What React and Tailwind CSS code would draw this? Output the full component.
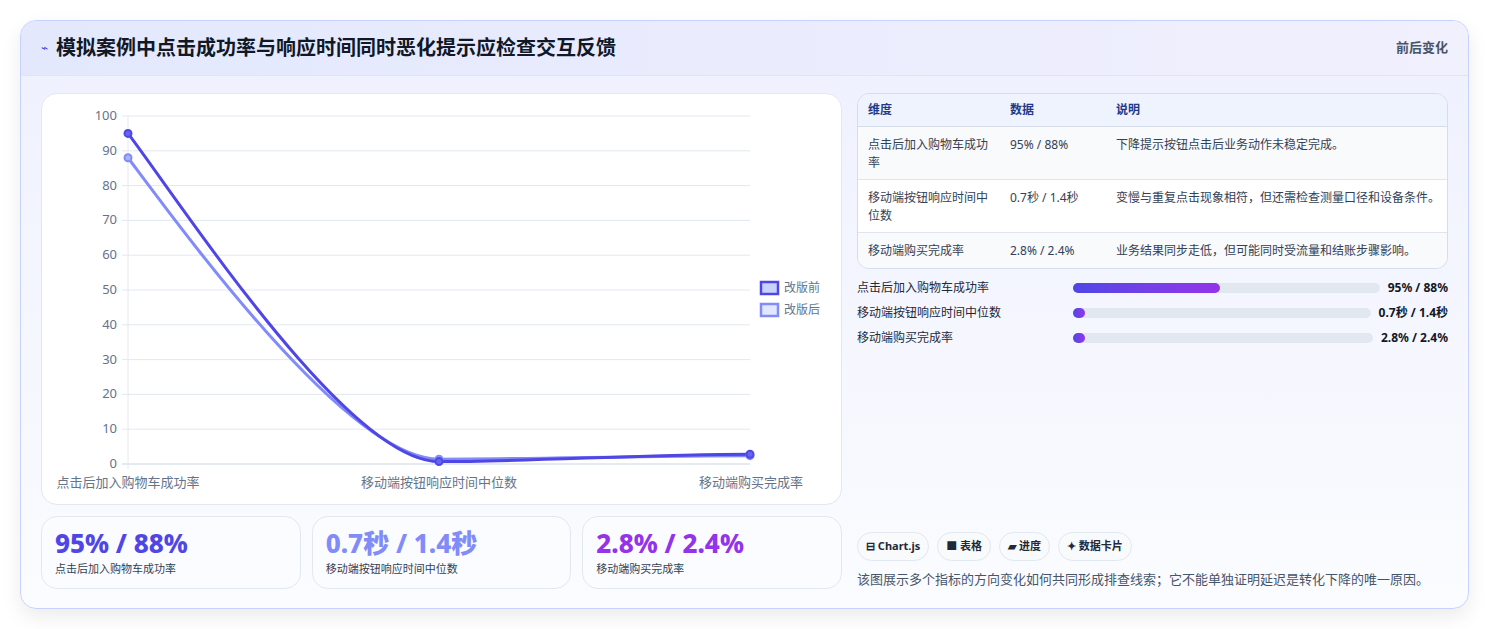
const font = { fontFamily: '"Noto Sans", "Noto Sans CJK SC", sans-serif' };

const rows = [
  ["点击后加入购物车成功率", "95% / 88%", "下降提示按钮点击后业务动作未稳定完成。"],
  ["移动端按钮响应时间中位数", "0.7秒 / 1.4秒", "变慢与重复点击现象相符，但还需检查测量口径和设备条件。"],
  ["移动端购买完成率", "2.8% / 2.4%", "业务结果同步走低，但可能同时受流量和结账步骤影响。"],
];

function Chart() {
  const x0 = 86, x1 = 708, yTop = 22, yBot = 370;
  const y = (v) => yBot - (v / 100) * (yBot - yTop);
  const xs = [x0, (x0 + x1) / 2, x1];
  const before = [95, 0.7, 2.8];
  const after = [88, 1.4, 2.4];
  const path = (d) =>
    `M${xs[0]},${y(d[0])} C${xs[0] + 60},${y(d[0]) + 80} ${xs[1] - 90},${y(d[1])} ${xs[1]},${y(d[1])} S${xs[2] - 100},${y(d[2])} ${xs[2]},${y(d[2])}`;
  return (
    <svg width="800" height="410" className="block">
      {[0, 10, 20, 30, 40, 50, 60, 70, 80, 90, 100].map((v) => (
        <g key={v}>
          <line x1={x0 - 6} x2={x1} y1={y(v)} y2={y(v)} stroke={v === 0 ? "#cbd5e1" : "#e2e8f0"} />
          <text x={x0 - 11} y={y(v) + 4} textAnchor="end" fontSize="13" fill="#64748b" style={font}>{v}</text>
        </g>
      ))}
      <line x1={x0} x2={x0} y1={yTop} y2={yBot + 5} stroke="#e2e8f0" />
      <path d={path(after)} fill="none" stroke="#818cf8" strokeWidth="3" />
      <path d={path(before)} fill="none" stroke="#4f46e5" strokeWidth="3" />
      {xs.map((x, i) => (
        <g key={i}>
          <circle cx={x} cy={y(after[i])} r="3.5" fill="#a5b4fc" stroke="#818cf8" strokeWidth="2" />
          <circle cx={x} cy={y(before[i])} r="3.5" fill="#6366f1" stroke="#4f46e5" strokeWidth="2" />
        </g>
      ))}
      {["点击后加入购物车成功率", "移动端按钮响应时间中位数", "移动端购买完成率"].map((t, i) => (
        <text key={t} x={i === 0 ? 86 : i === 1 ? 397 : 709} y="393" textAnchor="middle" fontSize="13" fill="#64748b" style={font}>{t}</text>
      ))}
      <rect x="719" y="188" width="17" height="12" fill="#c7d2fe" stroke="#4f46e5" strokeWidth="2.5" />
      <text x="742" y="198" fontSize="12" fill="#64748b" style={font}>改版前</text>
      <rect x="719" y="210" width="17" height="12" fill="#e0e7ff" stroke="#818cf8" strokeWidth="2.5" />
      <text x="742" y="220" fontSize="12" fill="#64748b" style={font}>改版后</text>
    </svg>
  );
}

export default function App() {
  return (
    <div className="min-h-screen bg-white pt-5 px-5" style={font}>
      <div className="w-[1449px] h-[589px] rounded-2xl border border-[#c7d2fe] bg-gradient-to-b from-[#eef0fe] to-[#fbfcff] shadow-[0_8px_20px_rgba(0,0,0,0.08)] overflow-hidden">
        <div className="h-[55px] flex items-center justify-between px-5 bg-gradient-to-r from-[#e3e8fd] to-[#f1f0fd] border-b border-[#dfe5f7]">
          <div className="flex items-center gap-2">
            <span className="text-[#4f46e5] text-xs">⌁</span>
            <h1 className="text-[20px] font-bold text-[#111827]">模拟案例中点击成功率与响应时间同时恶化提示应检查交互反馈</h1>
          </div>
          <span className="text-[13px] font-semibold text-[#475569]">前后变化</span>
        </div>
        <div className="flex gap-[15px] px-5 pt-[17px]">
          <div className="w-[801px] flex flex-col gap-[11px]">
            <div className="h-[412px] rounded-2xl border border-[#e2e8f0] bg-white">
              <Chart />
            </div>
            <div className="flex gap-[11px]">
              {[
                ["95% / 88%", "text-[#4f46e5]", "点击后加入购物车成功率"],
                ["0.7秒 / 1.4秒", "text-[#818cf8]", "移动端按钮响应时间中位数"],
                ["2.8% / 2.4%", "text-[#9333ea]", "移动端购买完成率"],
              ].map(([v, c, l]) => (
                <div key={l} className="w-[260px] h-[73px] rounded-2xl border border-[#e2e8f0] bg-[#fbfcff] px-[13px] pt-[10px]">
                  <div className={`text-[26px] font-extrabold leading-8 ${c}`}>{v}</div>
                  <div className="text-[11px] text-[#334155] mt-[2px]">{l}</div>
                </div>
              ))}
            </div>
          </div>
          <div className="flex-1 flex flex-col">
            <div className="rounded-xl border border-[#d5dcea] overflow-hidden text-[12px] text-[#334155]">
              <div className="flex h-[33px] items-center bg-[#eef3fd] border-b border-[#d5dcea] font-bold text-[#1e3a8a]">
                <div className="w-[152px] pl-[10px]">维度</div>
                <div className="w-[106px]">数据</div>
                <div>说明</div>
              </div>
              {rows.map((r, i) => (
                <div key={i} className={`flex py-[9px] leading-[18px] ${i < 2 ? "border-b border-[#dfe5ef] h-[53px]" : "h-[35px]"} ${i === 1 ? "bg-white" : "bg-[#f8fafc]"}`}>
                  <div className="w-[152px] pl-[10px] pr-[16px]">{r[0]}</div>
                  <div className="w-[106px]">{r[1]}</div>
                  <div className="flex-1">{r[2]}</div>
                </div>
              ))}
            </div>
            <div className="flex flex-col gap-[7px] mt-[10px] text-[12px] text-[#1f2937]">
              {[
                ["点击后加入购物车成功率", "95% / 88%", "w-[48%]"],
                ["移动端按钮响应时间中位数", "0.7秒 / 1.4秒", "w-[12px]"],
                ["移动端购买完成率", "2.8% / 2.4%", "w-[12px]"],
              ].map(([l, v, w]) => (
                <div key={l} className="flex items-center h-[18px]">
                  <div className="w-[216px]">{l}</div>
                  <div className="flex-1 h-[10px] rounded-full bg-[#e2e8f0] mr-[8px]">
                    <div className={`h-full rounded-full bg-gradient-to-r from-[#4f46e5] to-[#9333ea] ${w}`} />
                  </div>
                  <div className="font-bold text-[#111827]">{v}</div>
                </div>
              ))}
            </div>
            <div className="flex gap-[8px] mt-[185px] text-[11px] font-bold text-[#1f2937]">
              {["⊟ Chart.js", "■ 表格", "▰ 进度", "✦ 数据卡片"].map((t) => (
                <span key={t} className="h-[29px] px-[8px] flex items-center rounded-full border border-[#e2e8f0] bg-[#f8fafc]">{t}</span>
              ))}
            </div>
            <p className="mt-[9px] text-[13px] text-[#475569]">该图展示多个指标的方向变化如何共同形成排查线索；它不能单独证明延迟是转化下降的唯一原因。</p>
          </div>
        </div>
      </div>
    </div>
  );
}
